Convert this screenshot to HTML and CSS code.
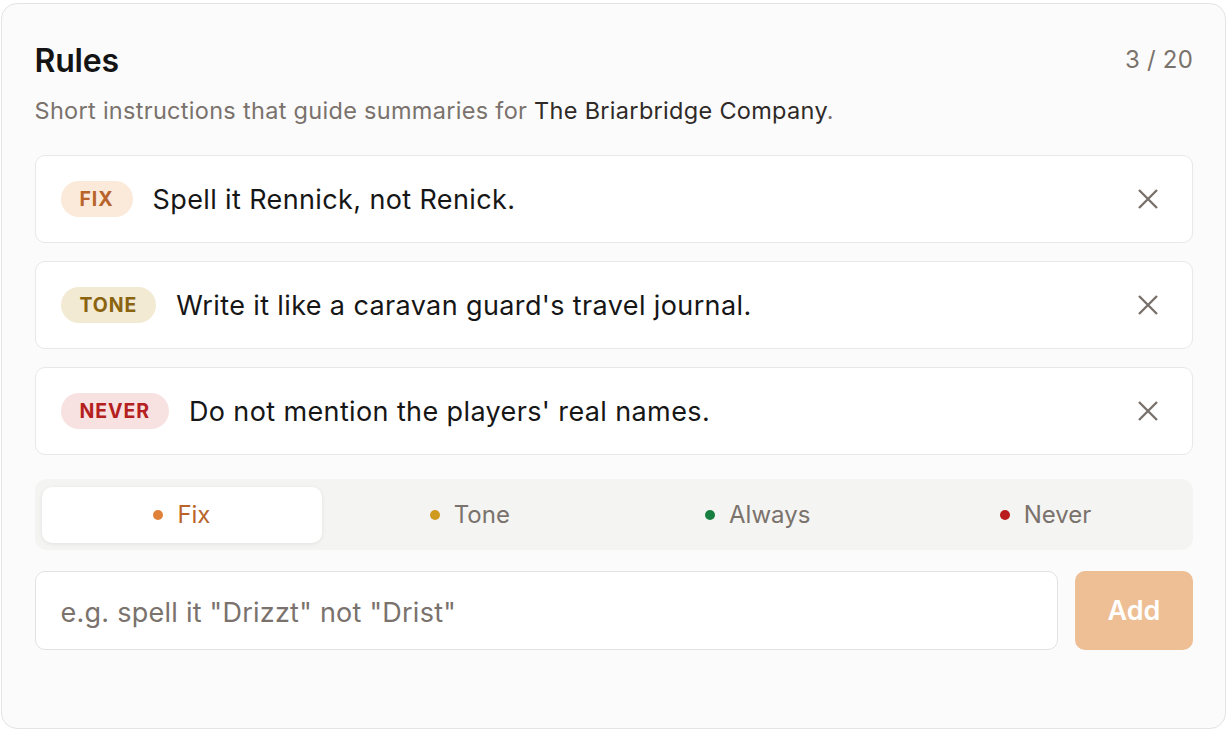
FILE: index.html
```html
<!DOCTYPE html>
<html lang="en">
<head>
    <meta charset="UTF-8" />
    <meta name="viewport" content="width=device-width, initial-scale=1.0"/>
    <title>Rules</title>
    <link rel="stylesheet" href="styles.css">
</head>
<body>
<div class="panel">
    <div class="panel-head">
        <h2>Rules</h2>
        <span class="count">3 / 20</span>
    </div>
    <p class="subtitle">Short instructions that guide summaries for <strong>The Briarbridge Company</strong>.</p>

    <!-- Rule list -->
    <div class="rule-list">
        <div class="rule">
            <span class="badge badge-fix">FIX</span>
            <span class="rule-text">Spell it Rennick, not Renick.</span>
            <button class="remove-btn" aria-label="Remove rule">
                <svg viewBox="0 0 22 22" width="22" height="22"><path d="M2 2L20 20M20 2L2 20"/></svg>
            </button>
        </div>
        <div class="rule">
            <span class="badge badge-tone">TONE</span>
            <span class="rule-text">Write it like a caravan guard's travel journal.</span>
            <button class="remove-btn" aria-label="Remove rule">
                <svg viewBox="0 0 22 22" width="22" height="22"><path d="M2 2L20 20M20 2L2 20"/></svg>
            </button>
        </div>
        <div class="rule">
            <span class="badge badge-never">NEVER</span>
            <span class="rule-text">Do not mention the players' real names.</span>
            <button class="remove-btn" aria-label="Remove rule">
                <svg viewBox="0 0 22 22" width="22" height="22"><path d="M2 2L20 20M20 2L2 20"/></svg>
            </button>
        </div>
    </div>

    <!-- Rule type picker -->
    <div class="type-picker">
        <button class="type-btn active"><span class="dot dot-fix"></span>Fix</button>
        <button class="type-btn"><span class="dot dot-tone"></span>Tone</button>
        <button class="type-btn"><span class="dot dot-always"></span>Always</button>
        <button class="type-btn"><span class="dot dot-never"></span>Never</button>
    </div>

    <div class="add-row">
        <input type="text" class="rule-input" placeholder='e.g. spell it "Drizzt" not "Drist"'>
        <button class="add-btn">Add</button>
    </div>
</div>
</body>
</html>
```

FILE: styles.css
```css
* {
    box-sizing: border-box;
}

body {
    font-family: Inter, 'Noto Sans', sans-serif;
    background: #ffffff;
    margin: 0;
    padding: 3px 2px 5px 1px;
    height: 734px;
}

.panel {
    height: 100%;
    background: #fbfbfb;
    border: 1.5px solid #e4e4e4;
    border-radius: 16px;
    padding: 38px 32px 0 32.5px;
}

.panel-head {
    display: flex;
    justify-content: space-between;
    align-items: flex-start;
}

h2 {
    margin: 0;
    font-size: 32px;
    line-height: 38px;
    font-weight: 600;
    color: #141414;
    letter-spacing: -0.2px;
}

.count {
    font-size: 24px;
    line-height: 30px;
    margin-top: 3px;
    color: #7a726c;
    letter-spacing: 0.2px;
}

.subtitle {
    margin: 16px 0 0;
    font-size: 23.5px;
    line-height: 30px;
    color: #7a726c;
    letter-spacing: 0.3px;
}

.subtitle strong {
    font-weight: 400;
    color: #2f2a27;
}

.rule-list {
    display: flex;
    flex-direction: column;
    gap: 18px;
    margin-top: 29px;
}

.rule {
    display: flex;
    align-items: center;
    height: 88px;
    background: #ffffff;
    border: 1.5px solid #e8e8e8;
    border-radius: 10px;
    padding: 0 25px 0 25px;
}

.badge {
    display: inline-flex;
    align-items: center;
    height: 36px;
    padding: 0 19px;
    border-radius: 18px;
    font-size: 19.5px;
    font-weight: 700;
    letter-spacing: 0.9px;
    margin-right: 20px;
}

.badge-fix {
    background: #fbe9d9;
    color: #b8642a;
}

.badge-tone {
    background: #f3ead4;
    color: #8a6410;
}

.badge-never {
    background: #f8e1e1;
    color: #b42020;
}

.rule-text {
    flex: 1;
    font-size: 27px;
    color: #161616;
    letter-spacing: 0.38px;
}

.remove-btn {
    background: none;
    border: none;
    padding: 8px;
    display: flex;
    cursor: pointer;
}

.remove-btn path {
    stroke: #77706a;
    stroke-width: 2.3;
    fill: none;
}

.type-picker {
    display: grid;
    grid-template-columns: repeat(4, 1fr);
    gap: 7px;
    margin-top: 24px;
    padding: 7.5px 7px;
    background: #f4f4f2;
    border-radius: 12px;
}

.type-btn {
    display: flex;
    align-items: center;
    justify-content: center;
    gap: 14px;
    height: 56px;
    background: transparent;
    border: none;
    border-radius: 10px;
    font-family: inherit;
    font-size: 24px;
    color: #7a726c;
    cursor: pointer;
}

.type-btn.active {
    background: #ffffff;
    color: #b8642a;
    box-shadow: 0 1px 4px rgba(0, 0, 0, 0.08);
}

.dot {
    width: 10px;
    height: 10px;
    border-radius: 50%;
}

.dot-fix { background: #e0813a; }
.dot-tone { background: #d09a20; }
.dot-always { background: #178040; }
.dot-never { background: #b81c1c; }

.add-row {
    display: flex;
    gap: 17px;
    margin-top: 21px;
}

.rule-input {
    flex: 1;
    height: 79px;
    border: 1.5px solid #e2e2e2;
    border-radius: 10px;
    background: #ffffff;
    padding: 3px 25px 0;
    font-family: inherit;
    font-size: 27px;
    letter-spacing: 0.25px;
    color: #161616;
    outline: none;
}

.rule-input::placeholder {
    color: #7a726c;
}

.add-btn {
    width: 118px;
    height: 79px;
    border: none;
    border-radius: 10px;
    background: #eebe94;
    color: #ffffff;
    font-family: inherit;
    font-size: 27px;
    font-weight: 600;
    cursor: pointer;
}
```
